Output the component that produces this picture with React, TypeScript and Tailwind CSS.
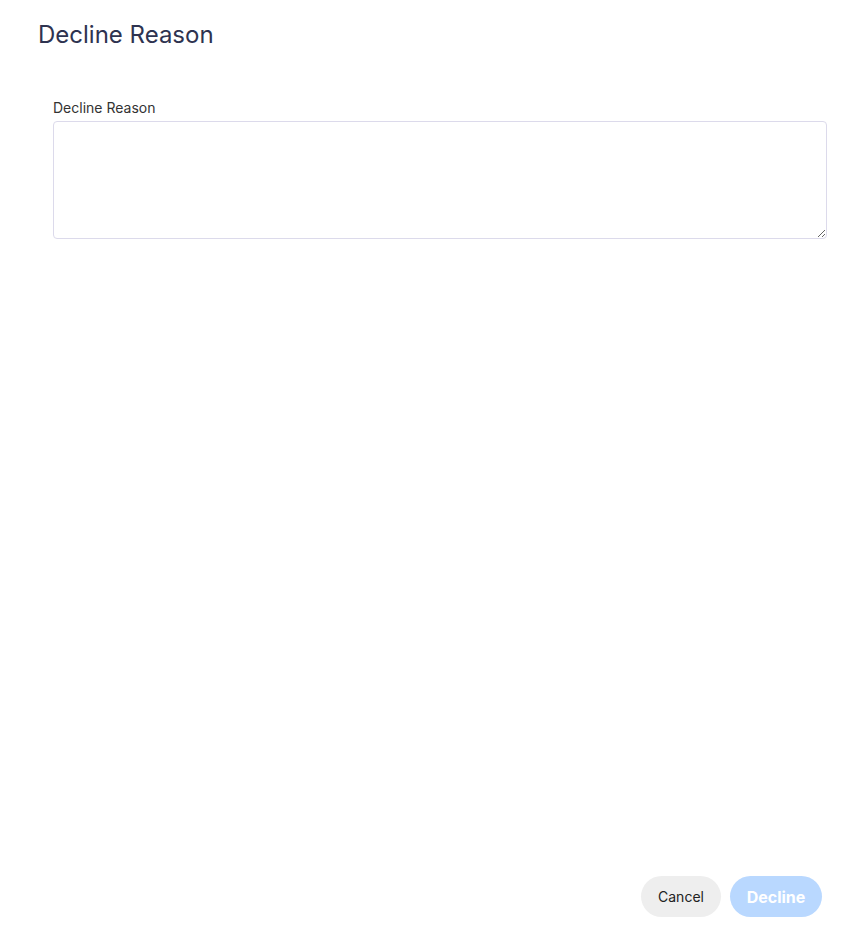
export default function App() {
  return (
    <div className="h-[934px] flex flex-col bg-white" style={{ fontFamily: 'Inter, "Noto Sans", sans-serif' }}>
      {/* Header */}
      <div className="px-[38px] pt-[19px]">
        <h2 className="text-[24px] leading-[32px] font-normal text-[#2e3350]">Decline Reason</h2>
      </div>

      {/* Body */}
      <div className="flex-1 pl-[53px] pr-[40px] pt-[47px]">
        <label className="block text-[14px] leading-[20px] text-[#333333] mb-[3px]">Decline Reason</label>
        <textarea className="block w-full h-[118px] border border-[#dcdaeb] rounded-[4px] resize-y outline-none" />
      </div>

      {/* Footer */}
      <div className="flex justify-end gap-[9px] pr-[45px] pb-[17px]">
        <button className="h-[41px] w-[80px] rounded-full bg-[#eeeeee] text-[14px] text-[#222222]">Cancel</button>
        <button disabled className="h-[41px] w-[92px] rounded-full bg-[#b9d8ff] text-[16px] font-bold text-white">Decline</button>
      </div>
    </div>
  );
}
